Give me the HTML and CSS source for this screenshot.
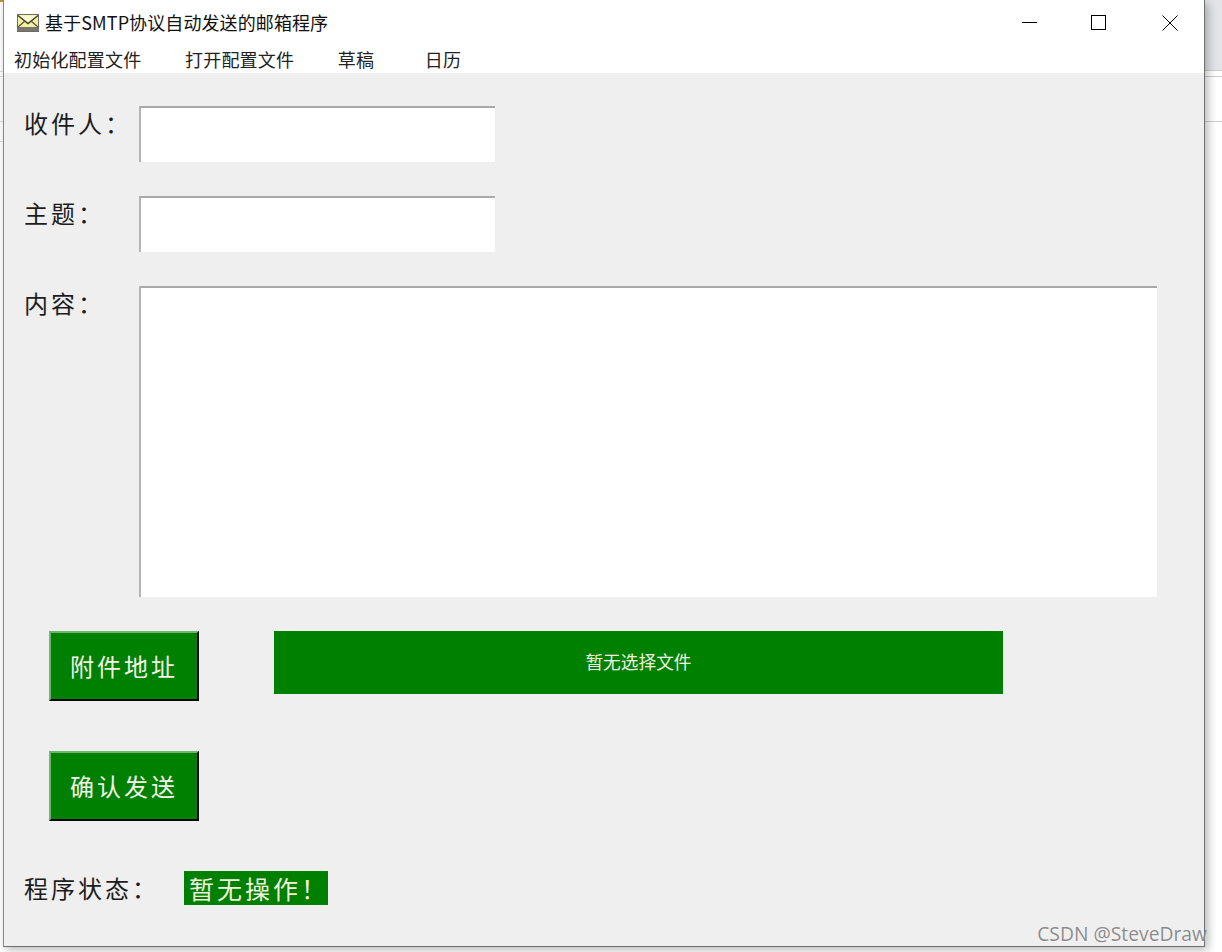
FILE: index.html
```html
<!DOCTYPE html>
<html lang="zh">
<head>
<meta charset="utf-8">
<title>基于SMTP协议自动发送的邮箱程序</title>
<link rel="stylesheet" href="styles.css">
</head>
<body>
<div class="window">
  <header class="titlebar">
    <svg class="app-icon" width="22" height="18" viewBox="0 0 22 18">
      <rect x="0.5" y="0.5" width="21" height="17" fill="#55554f" stroke="#6d6d66"/>
      <rect x="1" y="1" width="20" height="12" fill="#f4f0a0"/>
      <rect x="1" y="13" width="20" height="4" fill="#77776f"/>
      <path d="M1 1.500 11 9.500 21 1.500" fill="#fbf8d0" stroke="#3a3a2c" stroke-width="1.400"/>
      <path d="M1 13 8 7M21 13 14 7" fill="none" stroke="#55553f" stroke-width="1.200"/>
    </svg>
    <span class="title-text">基于SMTP协议自动发送的邮箱程序</span>
    <div class="controls">
      <svg width="16" height="16" viewBox="0 0 16 16"><path d="M0 7.500H15" stroke="#000" fill="none"/></svg>
      <svg width="16" height="16" viewBox="0 0 16 16"><rect x="0.500" y="0.500" width="14" height="14" stroke="#000" fill="none"/></svg>
      <svg class="close-icon" width="16" height="16" viewBox="0 0 16 16"><path d="M0.500 0.500 15.500 15.500M15.500 0.500 0.500 15.500" stroke="#000" fill="none"/></svg>
    </div>
  </header>
  <nav class="menubar">
    <span>初始化配置文件</span>
    <span>打开配置文件</span>
    <span>草稿</span>
    <span class="menu-last">日历</span>
  </nav>
  <main class="client">
    <div class="row row-field">
      <label class="label">收件人<span class="colon">：</span></label>
      <div class="entry entry-short"></div>
    </div>
    <div class="row row-field">
      <label class="label">主题<span class="colon">：</span></label>
      <div class="entry entry-short"></div>
    </div>
    <div class="row row-text">
      <label class="label">内容<span class="colon">：</span></label>
      <div class="entry entry-long"></div>
    </div>
    <div class="row row-attach">
      <button class="btn">附件地址</button>
      <div class="file-bar">暂无选择文件</div>
    </div>
    <div class="row row-send">
      <button class="btn">确认发送</button>
    </div>
    <div class="row row-status">
      <span class="label label-status">程序状态<span class="colon">：</span></span>
      <span class="status-value">暂无操作！</span>
    </div>
  </main>
</div>
<div class="watermark">CSDN @SteveDraw</div>
</body>
</html>
```
FILE: styles.css
```css
* { box-sizing: border-box; }
html, body { margin: 0; height: 100%; }
body {
  width: 1222px;
  height: 952px;
  overflow: hidden;
  position: relative;
  font-family: "Noto Sans CJK SC", "Liberation Sans", sans-serif;
  background-color: #fff;
  background-image:
    linear-gradient(#cdcdcd, #cdcdcd),
    linear-gradient(#cdcdcd, #cdcdcd),
    linear-gradient(#cdcdcd, #cdcdcd),
    linear-gradient(#e3e4e8, #e3e4e8),
    linear-gradient(#dcdcdc, #dcdcdc),
    linear-gradient(#dcdcdc, #dcdcdc),
    linear-gradient(#dcdcdc, #dcdcdc),
    linear-gradient(#dcdcdc, #dcdcdc),
    linear-gradient(#c98a3a, #c98a3a);
  background-repeat: no-repeat;
  background-position:
    1205px 70px,
    1205px 76px,
    1205px 121px,
    1205px 0,
    0 71px,
    0 76px,
    0 121px,
    0 141px,
    0 0;
  background-size:
    17px 1px,
    17px 1px,
    17px 1px,
    17px 70px,
    3px 1px,
    3px 1px,
    3px 1px,
    3px 1px,
    3px 2px;
}
.window {
  width: 1202px;
  height: 947px;
  margin-left: 3px;
  border-left: 1px solid #8a8a8a;
  border-right: 1px solid #6f6f6f;
  border-bottom: 1px solid #6f6f6f;
  box-shadow: 3px 3px 9px rgba(0,0,0,.28);
  background: #efefef;
  display: flex;
  flex-direction: column;
}
.titlebar {
  height: 45px;
  background: #fff;
  display: flex;
  align-items: center;
  padding-left: 13px;
  flex: none;
}
.app-icon { margin-right: 6px; flex: none; }
.title-text { font-size: 18px; color: #111; letter-spacing: 0.1px; white-space: nowrap; position: relative; top: -1px; }
.controls {
  margin-left: auto;
  display: flex;
  gap: 53px;
  padding-right: 26px;
}
.close-icon { margin-left: 2px; }
.menubar {
  height: 28px;
  background: #fff;
  display: flex;
  align-items: center;
  padding-left: 10px;
  gap: 43.600px;
  font-size: 18px;
  letter-spacing: 0.2px;
  color: #222;
  flex: none;
}
.menu-last { margin-left: 7px; }
.client { flex: 1; padding-top: 33px; }
.row { display: flex; }
.row-field { height: 56px; margin-bottom: 34px; }
.row-text { height: 311px; margin-bottom: 34px; }
.label {
  width: 135px;
  padding-left: 20px;
  font-size: 24px;
  line-height: 34px;
  color: #1c1c1c;
  letter-spacing: 3px;
  white-space: nowrap;
  flex: none;
}
.colon { font-family: "Noto Sans CJK TC", sans-serif; }
.entry {
  background: #fff;
  border-top: 2px solid #a9a9a9;
  border-left: 2px solid #b4b4b4;
}
.entry-short { width: 356px; }
.entry-long { width: 1018px; }
.row-attach { padding-left: 45px; align-items: flex-start; margin-bottom: 50px; }
.btn {
  width: 150px;
  height: 70px;
  background: #008000;
  color: #f4f4e8;
  font: 24px "Noto Sans CJK SC", "Liberation Sans", sans-serif;
  letter-spacing: 3px;
  border-style: solid;
  border-width: 2px;
  border-color: #6fb56f #000 #000 #6fb56f;
  padding: 0 0 1px;
  flex: none;
}
.file-bar {
  width: 729px;
  height: 63px;
  margin-left: 75px;
  background: #008000;
  color: #f0f0e0;
  font-size: 17.700px;
  padding-bottom: 3px;
  display: flex;
  align-items: center;
  justify-content: center;
}
.row-send { padding-left: 45px; margin-bottom: 50px; }
.row-status { align-items: center; height: 34px; }
.label-status { width: 180px; }
.status-value {
  width: 144px;
  height: 34px;
  background: #008000;
  color: #f2f2dc;
  font-size: 25px;
  line-height: 34px;
  letter-spacing: 3px;
  padding-left: 5px;
  white-space: nowrap;
  overflow: hidden;
}
.watermark {
  position: absolute;
  right: 15px;
  top: 920px;
  font: 19.300px "Open Sans", "Liberation Sans", sans-serif;
  color: rgba(120,120,120,.85);
  text-shadow: 0 1px 1px rgba(255,255,255,.5);
}
```
